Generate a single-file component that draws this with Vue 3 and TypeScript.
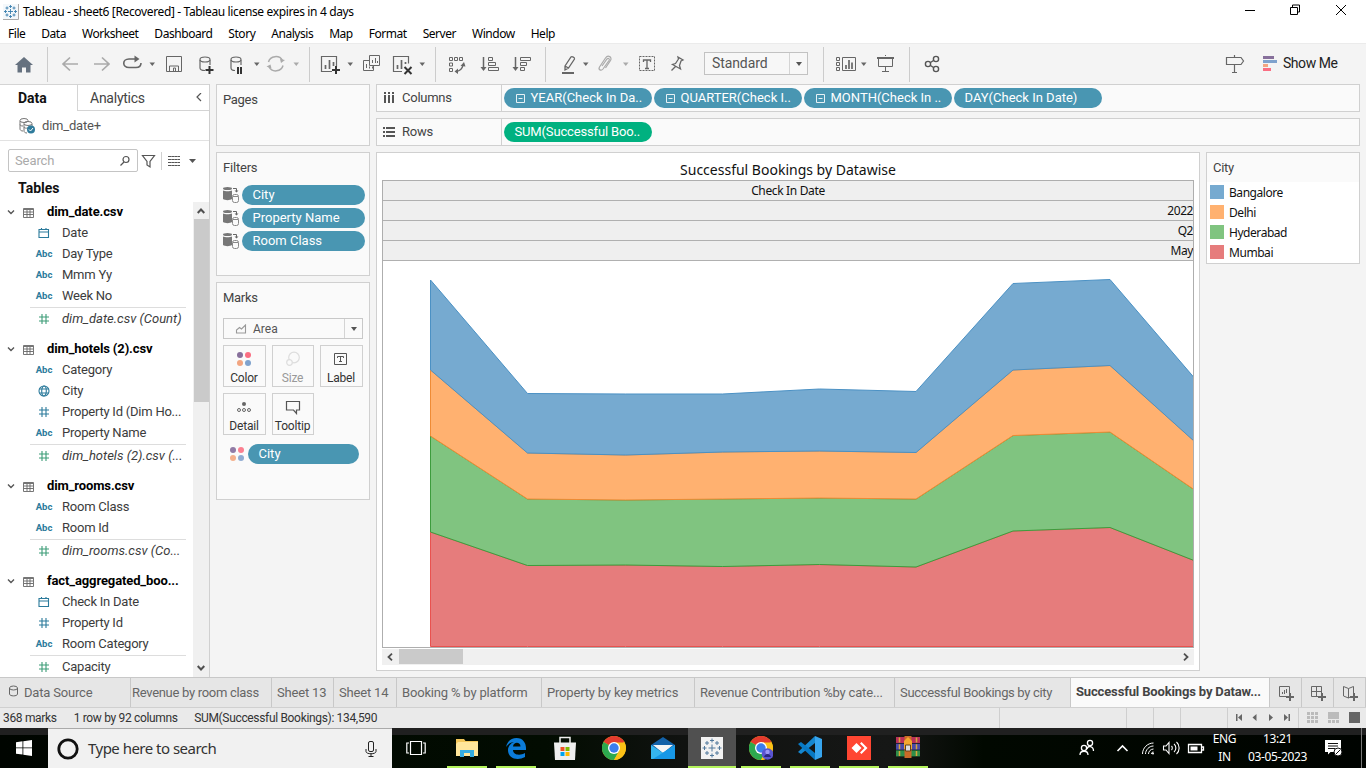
<script setup lang="ts">
interface Field { icon: 'date' | 'abc' | 'hash' | 'geo'; label: string; measure?: boolean; count?: boolean }
interface Table { name: string; fields: Field[] }

const menus = ['File', 'Data', 'Worksheet', 'Dashboard', 'Story', 'Analysis', 'Map', 'Format', 'Server', 'Window', 'Help']

const tables: Table[] = [
  { name: 'dim_date.csv', fields: [
    { icon: 'date', label: 'Date' },
    { icon: 'abc', label: 'Day Type' },
    { icon: 'abc', label: 'Mmm Yy' },
    { icon: 'abc', label: 'Week No' },
    { icon: 'hash', label: 'dim_date.csv (Count)', measure: true, count: true },
  ] },
  { name: 'dim_hotels (2).csv', fields: [
    { icon: 'abc', label: 'Category' },
    { icon: 'geo', label: 'City' },
    { icon: 'hash', label: 'Property Id (Dim Ho...' },
    { icon: 'abc', label: 'Property Name' },
    { icon: 'hash', label: 'dim_hotels (2).csv (...', measure: true, count: true },
  ] },
  { name: 'dim_rooms.csv', fields: [
    { icon: 'abc', label: 'Room Class' },
    { icon: 'abc', label: 'Room Id' },
    { icon: 'hash', label: 'dim_rooms.csv (Co...', measure: true, count: true },
  ] },
  { name: 'fact_aggregated_boo...', fields: [
    { icon: 'date', label: 'Check In Date' },
    { icon: 'hash', label: 'Property Id' },
    { icon: 'abc', label: 'Room Category' },
    { icon: 'hash', label: 'Capacity', measure: true },
  ] },
]

const columnPills = [
  { label: 'YEAR(Check In Da..', box: true },
  { label: 'QUARTER(Check I..', box: true },
  { label: 'MONTH(Check In ..', box: true },
  { label: 'DAY(Check In Date)', box: false },
]
const filters = ['City', 'Property Name', 'Room Class']

const xs = [430.5, 527.5, 625.5, 722.5, 819.5, 916, 1013, 1110, 1194]
const baseline = 646.5
const series = [
  { name: 'Bangalore', cls: 'bangalore', top: [280, 393.5, 394, 394, 389, 391.5, 283.5, 279.5, 377.5] },
  { name: 'Delhi', cls: 'delhi', top: [370, 453, 455, 452, 451, 452.5, 370, 365.5, 441] },
  { name: 'Hyderabad', cls: 'hyderabad', top: [436, 499, 500, 499, 498, 499, 435.5, 432, 489.5] },
  { name: 'Mumbai', cls: 'mumbai', top: [532, 565.5, 565, 566.5, 564.5, 567, 531, 527.5, 560.5] },
]
// Upper bands are drawn last so that their outline lies over the band below.
const areas = series.map((s, i) => {
  const lower = series[i + 1]?.top ?? xs.map(() => baseline)
  const back = lower.map((y, j) => `${xs[j]},${y}`).reverse().join(' ')
  const top = s.top.map((y, j) => `${xs[j]},${y}`).join(' ')
  return { cls: s.cls, outline: `${back} ${top}` }
}).reverse()

const sheets = ['Revenue by room class', 'Sheet 13', 'Sheet 14', 'Booking % by platform', 'Property by key metrics', 'Revenue Contribution %by cate...', 'Successful Bookings by city']
const apps = [
  { id: 'explorer', open: true }, { id: 'edge', open: true }, { id: 'store', open: false },
  { id: 'chrome', open: false }, { id: 'mail', open: false }, { id: 'tableau', open: true },
  { id: 'chrome2', open: true }, { id: 'code', open: true }, { id: 'anydesk', open: true }, { id: 'winrar', open: true },
]
const books = [{ y: 4, c: '#b8305a' }, { y: 10.7, c: '#4a4aa8' }, { y: 17.4, c: '#2f8f4a' }]
</script>

<template>
  <div class="window">
    <header class="titlebar">
      <svg class="logo" width="16" height="16" viewBox="0 0 16 16">
        <rect width="15" height="15" fill="#f4f8fb" /><path d="M0 15.500H15.500V0" stroke="#aaa" fill="none" />
        <g stroke="#3a7fae" fill="none"><path d="M7.500 5v5M5 7.500h5M7.500 1v3M6 2.500h3M7.500 11v3M6 12.500h3M2.500 6v3M1 7.500h3M12.500 6v3M11 7.500h3M4 2.500v3M2.500 4h3M11 2.500v3M9.500 4h3M4 9.500v3M2.500 11h3M11 9.500v3M9.500 11h3" stroke-width=".9" /></g>
      </svg>
      <span class="caption">Tableau - sheet6 [Recovered] - Tableau license expires in 4 days</span>
      <svg class="wincontrols" width="120" height="20" viewBox="1240 0 120 20" fill="none" stroke="#000">
        <path d="M1245 10.500h10M1290.500 7.500h7v7h-7zM1292.500 7v-2h7v7h-2M1336 5l10 10M1346 5l-10 10" />
      </svg>
    </header>
    <nav class="menubar"><span v-for="m in menus" :key="m">{{ m }}</span></nav>

    <div class="toolbar">
      <svg width="47" height="41" viewBox="0 44 47 41"><path d="M24 57l9 8h-2.500v7.500h-4.500v-5h-4v5h-4.500v-7.500h-2.500z" fill="#65717f" /></svg>
      <svg class="section" width="262" height="35" viewBox="47 47 262 35" fill="none" stroke="#666">
        <g stroke="#aaa" stroke-width="1.700"><path d="M78 64h-15m7-6.500l-7 6.500 7 6.500M94 64h15m-7-6.500l7 6.500-7 6.500" /></g>
        <path d="M136 59h-7c-7 0-7 8.500 0 8.500h7c4 0 5-2 5-4.500M133 59h4" stroke-width="1.600" /><path d="M134.500 55.500v7l5-3.500z" fill="#666" stroke="none" />
        <g fill="#666" stroke="none"><path d="M149.500 62.500h5.500l-2.700 3.500zM254 62.500h5.500l-2.700 3.500z" /><path d="M293.500 62.500h5.500l-2.700 3.500z" fill="#aaa" /></g>
        <path d="M166.500 56.500h15v15h-15zM169.500 71v-5h9v5M173.500 71v-3h2v3" />
        <g stroke-width="1.200"><ellipse cx="205" cy="59.500" rx="5" ry="2.500" /><path d="M200 60v8c0 1.500 2 2.500 5 2.500M210 60v5" /><ellipse cx="236" cy="59.500" rx="5" ry="2.500" /><path d="M231 60v8c0 1.500 2 2.500 4 2.500M241 60v5" /></g>
        <path d="M205.500 70h8M209.500 66v8M238 67v7M241 67v7" stroke="#333" stroke-width="2" />
        <g stroke="#aaa" stroke-width="1.500"><path d="M268.500 62a7.500 7 0 0 1 14-1.500M283 65.500a7.500 7 0 0 1-14 1.500" /><path d="M285 60l-4 3-1-4zM266.500 66.500l4-2 1 4z" fill="#aaa" stroke="none" /></g>
      </svg>
      <svg class="section" width="126" height="35" viewBox="309 47 126 35" fill="none" stroke="#666">
        <path d="M332 71.500h-10.500v-15h15v10" stroke-width="1.200" /><path d="M325.500 65v4M329.500 60v9M333.500 62v4" stroke-width="1.700" /><path d="M332 70h8M336 66v8" stroke="#333" stroke-width="2" />
        <path d="M347.500 62.500h5.500l-2.700 3.500zM419.500 62.500h5.500l-2.700 3.500z" fill="#666" stroke="none" />
        <path d="M369.500 55.500h10v10h-10zM369 60.500h-5.500v10h10v-5M366.500 64v4M369.500 66.500v2M372.500 66.500v2M372.500 60v3M375.500 58v5M377.500 61v2" />
        <path d="M402 71.500h-8.500v-15h15v7" stroke-width="1.200" /><path d="M397.500 65v4M401.500 60v9M405.500 62v2" stroke-width="1.700" /><path d="M404.500 67l7 7M411.500 67l-7 7" stroke="#333" stroke-width="2" />
      </svg>
      <svg class="section" width="110" height="35" viewBox="435 47 110 35" fill="none" stroke="#666">
        <path d="M449.500 57.500h3v3h-3zM454.500 57.500h3v3h-3zM459.500 57.500h3v3h-3zM449.500 63h3v3h-3zM449.500 68.500h3v3h-3z" /><path d="M463 65c-.5 3-3 6-7 6.500" stroke-width="1.400" /><path d="M460.500 66l3.500-4 1.500 4.500zM458 68.500l-3.500 3 3.500 2.500z" fill="#666" stroke="none" />
        <path d="M483.500 57v12M515.500 57v12" stroke-width="1.500" /><path d="M480.500 67h6l-3 4zM512.500 67h6l-3 4z" fill="#666" stroke="none" />
        <path d="M488.500 57.500h4v3h-4zM488.500 62.500h7v3h-7zM488.500 67.500h10v3h-10zM520.500 57.500h10v3h-10zM520.500 62.500h6v3h-6zM520.500 67.500h4v3h-4z" />
      </svg>
      <svg class="section" width="159" height="35" viewBox="545 47 159 35" fill="none" stroke="#666">
        <path d="M565 66l6-9c1-1 4 .5 3.500 2l-6 9-3.500 2zM565 66l3.500 2" stroke-width="1.300" /><path d="M562 73h12" stroke-width="2" />
        <path d="M583 62.500h5.500l-2.700 3.500z" fill="#666" stroke="none" /><path d="M623 62.500h5.500l-2.700 3.500z" fill="#aaa" stroke="none" />
        <path d="M602 66l5-7c1.500-1.500 3 0 2 1.500l-6 8.500c-2 2.500-5 .5-3.500-2l6-9c2.500-3.500 7-1 5 2.500l-5 7.500" stroke="#aaa" stroke-width="1.200" />
        <path d="M639.500 56.500h15v14h-15z" stroke-dasharray="2 1" /><path d="M643.500 62v-2h7v2M647 60v8M645 68.500h4" stroke-width="1.300" />
        <path d="M678 57l5 3-2 1-1.500 4.500 1 3.500-8-4.500 3-1 3-4.500zM675.500 66.500l-4 4" stroke-width="1.300" />
      </svg>
      <div class="select"><span>Standard</span><i class="caret" /></div>
      <svg class="section guides" width="86" height="35" viewBox="823 47 86 35" fill="none" stroke="#666">
        <path d="M836.500 57.500h3v3h-3zM836.500 62.500h3v3h-3zM836.500 67.500h3v3h-3zM842.500 57.500h13v13h-13z" /><path d="M846 65v4M849 60v9M852 62.500v6.500" stroke-width="1.700" /><path d="M861 62.500h5.500l-2.700 3.500z" fill="#666" stroke="none" />
        <path d="M877 58h17" stroke-width="2" /><path d="M878.500 58v8.500h14v-8.500M885.500 56v-1M885.500 66.500v5M882 71.500h7" />
      </svg>
      <svg class="section" width="60" height="35" viewBox="909 47 60 35" fill="none" stroke="#555" stroke-width="1.400"><circle cx="928" cy="64" r="2.600" /><circle cx="936" cy="59" r="2.600" /><circle cx="936" cy="69" r="2.600" /><path d="M930.500 62.500l3-2M930.500 65.500l3 2" /></svg>
      <svg class="guide" width="60" height="35" viewBox="1222 47 60 35" fill="none" stroke="#666" stroke-width="1.200">
        <path d="M1226.500 57.500h14.500l2.500 3.500-2.500 3.500h-14.500zM1234.500 55v2.500M1234.500 64.500v8M1232 72.500h5" />
        <g stroke="none"><path d="M1263 56h11v3h-11z" fill="#87709b" /><path d="M1263 60h14v3h-14z" fill="#7fa2cd" /><path d="M1263 64h5v3h-5z" fill="#f2a581" /><path d="M1263 68h8v3h-8z" fill="#fa6e82" /></g>
      </svg>
      <span class="showme">Show Me</span>
    </div>

    <div class="workspace">
      <aside class="data">
        <div class="datatabs">
          <span class="on">Data</span>
          <span class="off">Analytics <svg width="8" height="10" viewBox="0 0 8 10"><path d="M6 0L2 4l4 4" fill="none" stroke="#555" stroke-width="1.200" /></svg></span>
        </div>
        <div class="source">
          <svg width="18" height="18" viewBox="0 0 18 18" fill="none" stroke="#777"><ellipse cx="5" cy="3.500" rx="4" ry="2" /><path d="M1 4v8c0 1 1 2 3 2M1 7.500c0 1 1 1.500 3 1.500M9 4v1" /><ellipse cx="9" cy="6.500" rx="4" ry="2" /><path d="M5 7v7c0 1 1 2 3 2M5 10c0 1 2 1.500 4 1M13 7v2" /><circle cx="12" cy="12.500" r="4" fill="#2f7b9c" stroke="none" /><path d="M10 12.500l1.500 1.500 2.500-3" stroke="#fff" /></svg>
          <span>dim_date+</span>
        </div>
        <div class="find">
          <div class="search"><span>Search</span><svg width="12" height="12" viewBox="0 0 12 12" fill="none" stroke="#555" stroke-width="1.200"><circle cx="7" cy="4.500" r="3" /><path d="M5 7L1.500 10.500" /></svg></div>
          <svg width="60" height="18" viewBox="140 151 60 18" fill="none" stroke="#555"><path d="M142.500 154.500h12l-4.500 6v5.500l-3-2v-3.500z" stroke-width="1.200" /><path d="M161.500 151v18" stroke="#d0d0d0" /><path d="M168 155.500h12M168 158.500h12M168 161.500h12M168 164.500h12" stroke-dasharray="3 .3" stroke-width="1.200" /><path d="M189 158h7l-3.500 4z" fill="#555" stroke="none" /></svg>
        </div>
        <div class="tables-title">Tables</div>
        <div class="treewrap">
          <div class="tree">
            <section v-for="t in tables" :key="t.name" class="group">
              <div class="head">
                <svg width="8" height="6" viewBox="0 0 8 6"><path d="M1 1.500l3 3 3-3" fill="none" stroke="#555" stroke-width="1.400" /></svg>
                <svg class="grid" width="11" height="10" viewBox="0 0 11 10"><path d="M.5.500h10v9H.5zM1 1.500h9M1 4h9M1 6.500h9M4 2v7M7 2v7" fill="none" stroke="#666" stroke-width=".9" /></svg>
                <b>{{ t.name }}</b>
              </div>
              <div v-for="f in t.fields" :key="f.label" :class="['field', { measure: f.measure, count: f.count }]">
                <span class="type">
                  <template v-if="f.icon === 'abc'">Abc</template>
                  <svg v-else width="12" height="12" viewBox="0 0 12 12" fill="none" stroke="currentColor" stroke-width="1.100">
                    <path v-if="f.icon === 'date'" d="M1 2.500h9.500v8H1zM1 5h9.500M3.500 1v2M8 1v2" />
                    <path v-else-if="f.icon === 'hash'" d="M4 1v10M8 1v10M1 4h10M1 8h10" />
                    <template v-else><circle cx="6" cy="6" r="5" /><ellipse cx="6" cy="6" rx="2.300" ry="5" /><path d="M1.500 4h9M1.500 8h9" /></template>
                  </svg>
                </span>
                <span class="name">{{ f.label }}</span>
              </div>
            </section>
          </div>
          <div class="vscroll">
            <svg width="8" height="6" viewBox="0 0 8 6"><path d="M.7 5L4 1.500 7.300 5" fill="none" stroke="#505050" stroke-width="2" /></svg>
            <i />
            <svg width="8" height="6" viewBox="0 0 8 6"><path d="M.7 1L4 4.500 7.300 1" fill="none" stroke="#505050" stroke-width="2" /></svg>
          </div>
        </div>
      </aside>

      <div class="cards">
        <section class="card pages"><h3>Pages</h3></section>
        <section class="card filters">
          <h3>Filters</h3>
          <div v-for="f in filters" :key="f" class="filter">
            <svg width="17" height="18" viewBox="0 0 17 18"><ellipse cx="4.500" cy="2.500" rx="4.500" ry="1.500" fill="#777" /><path d="M0 4.500c2 1 7 1 9 0V13c-2 1.500-7 1.500-9 0z" fill="#777" /><path d="M10 2.500h3.500V5" stroke="#666" fill="none" /><path d="M11.500 4.500h4l-2 2z" fill="#666" /><rect x="9.500" y="8.500" width="6" height="8" rx="2" fill="#fafafa" stroke="#888" /><path d="M10 10.500h5" stroke="#888" /></svg>
            <span class="pill">{{ f }}</span>
          </div>
        </section>
        <section class="card marks">
          <h3>Marks</h3>
          <div class="marktype"><svg width="12" height="10" viewBox="0 0 12 10"><path d="M1.500 9V6l3-2.500 2 1.500 4-4v8z" fill="none" stroke="#999" stroke-width="1.100" /></svg><span>Area</span><i class="caret" /></div>
          <div class="buttons">
            <div class="btn"><svg width="16" height="16" viewBox="0 0 16 16"><circle cx="4" cy="4" r="3" fill="#87709b" /><circle cx="12" cy="4" r="3" fill="#fa6e82" /><circle cx="4" cy="12" r="3" fill="#f2a581" /><circle cx="12" cy="12" r="3" fill="#7fa2cd" /></svg><span>Color</span></div>
            <div class="btn dim"><svg width="16" height="16" viewBox="0 0 16 16" fill="none" stroke="#ddd" stroke-width="1.200"><circle cx="9" cy="6.500" r="5.300" /><circle cx="4.500" cy="11.500" r="2.800" fill="#fafafa" /></svg><span>Size</span></div>
            <div class="btn"><svg width="16" height="16" viewBox="0 0 16 16" fill="none" stroke="#555"><path d="M1.500 2.500h12v11h-12zM4.500 7V5.500h6V7M7.500 5.500V11M6 10.500h3" /></svg><span>Label</span></div>
            <div class="btn"><svg width="16" height="16" viewBox="0 0 16 16" fill="none" stroke="#666"><circle cx="8" cy="5" r="2" fill="#666" stroke="none" /><circle cx="3" cy="11" r="1.500" /><circle cx="8" cy="11" r="1.500" /><circle cx="13" cy="11" r="1.500" /></svg><span>Detail</span></div>
            <div class="btn"><svg width="16" height="16" viewBox="0 0 16 16" fill="none" stroke="#555" stroke-width="1.200"><path d="M1.500 2.500h13v8.500h-3v3.500L8.500 11h-7z" /></svg><span>Tooltip</span></div>
          </div>
          <div class="encoding">
            <svg width="16" height="16" viewBox="0 0 16 16"><circle cx="4" cy="4" r="3" fill="#917ba5" /><circle cx="12" cy="4" r="3" fill="#fb8090" /><circle cx="4" cy="12" r="3" fill="#f5b08c" /><circle cx="12" cy="12" r="3" fill="#90acd2" /></svg>
            <span class="pill">City</span>
          </div>
        </section>
      </div>

      <div class="stage">
        <div class="shelf">
          <div class="shelfname"><svg width="14" height="13" viewBox="0 0 14 13" stroke="#555" stroke-width="2"><path d="M3 0v2M7 0v2M11 0v2M3 3v8M7 3v8M11 3v8" /></svg>Columns</div>
          <span v-for="p in columnPills" :key="p.label" class="pill">
            <svg v-if="p.box" width="9" height="9" viewBox="0 0 9 9"><path d="M.5.500h8v8h-8zM2.500 4.500h4" fill="none" stroke="#e6f1f5" /></svg>{{ p.label }}
          </span>
        </div>
        <div class="shelf rows">
          <div class="shelfname"><svg width="14" height="13" viewBox="0 0 14 13" stroke="#555" stroke-width="2"><path d="M1 2h2M1 6h2M1 10h2M4 2h9M4 6h9M4 10h9" /></svg>Rows</div>
          <span class="pill green">SUM(Successful Boo..</span>
        </div>
        <div class="canvas">
          <main class="viz">
            <h1>Successful Bookings by Datawise</h1>
            <div class="frame">
              <div class="hrow center">Check In Date</div>
              <div class="hrow">2022</div>
              <div class="hrow">Q2</div>
              <div class="hrow">May</div>
              <svg class="chart" width="810" height="386" viewBox="383 261 810 386">
                <polyline v-for="a in areas" :key="a.cls" :class="a.cls" :points="a.outline" />
              </svg>
            </div>
            <div class="hscroll">
              <svg width="6" height="8" viewBox="0 0 6 8"><path d="M5 .7L1.500 4 5 7.300" fill="none" stroke="#505050" stroke-width="1.800" /></svg><i />
              <svg width="6" height="8" viewBox="0 0 6 8"><path d="M1 .7L4.500 4 1 7.300" fill="none" stroke="#505050" stroke-width="1.800" /></svg>
            </div>
          </main>
          <section class="legend">
            <h3>City</h3>
            <div v-for="s in series" :key="s.name" class="item"><i :class="s.cls" /><span>{{ s.name }}</span></div>
          </section>
        </div>
      </div>
    </div>

    <div class="sheettabs">
      <span class="ds"><svg width="9" height="12" viewBox="0 0 9 12" fill="none" stroke="#666"><ellipse cx="4.500" cy="3" rx="4" ry="2" /><path d="M.5 3v6c0 2.500 8 2.500 8 0V3" /></svg>Data Source</span>
      <span v-for="(s, i) in sheets" :key="s" :class="{ first: i === 0, last: i === sheets.length - 1 }">{{ s }}</span>
      <span class="active">Successful Bookings by Dataw...</span>
      <span class="new"><svg width="16" height="16" viewBox="0 0 16 16" fill="none" stroke="#666"><path d="M8 11.500H1.500v-10h10V8M4.500 7v2M6.500 5v4M8.500 4v4" /><path d="M8 12h8M12 8v8" stroke-width="2" /></svg></span>
      <span class="new"><svg width="16" height="16" viewBox="0 0 16 16" fill="none" stroke="#666"><path d="M8 11.500H1.500v-10h10V8M1.500 6.500h10M6.500 1.500v10" /><path d="M8 12h8M12 8v8" stroke-width="2" /></svg></span>
      <span class="new"><svg width="16" height="16" viewBox="0 0 16 16" fill="none" stroke="#666"><path d="M9 11.500L6.500 13 1.500 11V1.500L6.500 3.500l5-2V8M6.500 3.500V13" /><path d="M8 12h8M12 8v8" stroke-width="2" /></svg></span>
    </div>
    <footer class="status">
      <span class="s1">368 marks</span><span class="s2">1 row by 92 columns</span><span class="s3">SUM(Successful Bookings): 134,590</span>
      <svg width="367" height="20" viewBox="999 708 367 20">
        <path d="M999.500 708v20M1126.500 708v20M1153.500 708v20M1180.500 708v20M1227.500 708v20M1298.500 708v20" stroke="#cfcfcf" />
        <g fill="#666"><path d="M1236 714h1.500v7h-1.500zM1242 714v7l-4-3.500zM1256.500 714v7l-4-3.500zM1269 714v7l4-3.500zM1284 714v7l4-3.500zM1288.500 714h1.500v7h-1.500z" /><path d="M1349 712h11v11h-11z" /></g>
        <g fill="#bbb"><path d="M1307 712h3v3h-3zM1311 712h3v3h-3zM1315 712h3v3h-3zM1307 716h3v3h-3zM1311 716h3v3h-3zM1315 716h3v3h-3zM1307 720h3v3h-3zM1311 720h3v3h-3zM1315 720h3v3h-3zM1328 712h11v7h-11zM1328 720h3v3h-3zM1332 720h3v3h-3zM1336 720h3v3h-3z" /></g>
      </svg>
    </footer>

    <div class="taskbar">
      <div class="start"><svg width="16" height="16" viewBox="0 0 16 16" fill="#fff"><path d="M0 2.300L6.500 1.300v6.200H0zM7.300 1.200L16 0v7.500H7.300zM0 8.300h6.500v6.300L0 13.700zM7.300 8.300H16V16l-8.700-1.200z" /></svg></div>
      <div class="tsearch">
        <svg width="22" height="22" viewBox="0 0 22 22"><circle cx="11" cy="11" r="9.200" fill="none" stroke="#111" stroke-width="2.800" /></svg>
        <span>Type here to search</span>
        <svg width="12" height="16" viewBox="0 0 12 16" fill="none" stroke="#222"><rect x="3.500" y=".5" width="5" height="10" rx="1.500" /><path d="M1 8v2.500c0 3 10 3 10 0V8M6 12.500V15M3.500 15.500h5" /></svg>
      </div>
      <div class="view"><svg width="20" height="16" viewBox="0 0 20 16" fill="none" stroke="#fff" stroke-width="1.200"><path d="M4.500 1.500h11v13h-11zM3 3H.8v10H3M17 3h2.200v10H17" /></svg></div>
      <div v-for="a in apps" :key="a.id" :class="['app', a.id, { open: a.open }]">
        <svg width="24" height="24" viewBox="0 0 24 24">
          <g v-if="a.id === 'explorer'"><path d="M1 3h8l1.500 2H23v15H1z" fill="#f4c75a" /><path d="M3 6h20v14H1V8z" fill="#ffe69b" /><path d="M5 21v-7h14v7h-4v-4H9v4z" fill="#35ace0" /></g>
          <g v-else-if="a.id === 'edge'"><path d="M2 11C4 4 8 2 12.500 2 19 2 22 7 22 12v2H9c0 5 7 6 12 3v4c-7 4-17 2-17-7 0-4 3-7 6-8-3 0-6 2-8 5zM9 10.500h7.500C16.500 5.500 9.500 5.500 9 10.500z" fill="#0b7bd8" fill-rule="evenodd" /></g>
          <g v-else-if="a.id === 'store'"><path d="M7 7V1.500h10V7" fill="none" stroke="#eee" stroke-width="1.500" /><path d="M1 6.500h22L22 24H2z" fill="#efefef" /><path d="M7.500 11h4v4h-4z" fill="#f05024" /><path d="M12.500 11h4v4h-4z" fill="#7fba00" /><path d="M7.500 16h4v4h-4z" fill="#00a4ef" /><path d="M12.500 16h4v4h-4z" fill="#ffb900" /></g>
          <g v-else-if="a.id === 'chrome' || a.id === 'chrome2'"><circle cx="12" cy="12" r="12" fill="#fbc116" /><path d="M12 12L1.600 6A12 12 0 0 1 22.400 6z" fill="#e33b2e" /><path d="M12 12L1.600 6A12 12 0 0 0 12 24l5.200-9z" fill="#2da94f" /><path d="M12 6.400h10.600A12 12 0 0 1 12 24l5-9z" fill="#fbc116" /><circle cx="12" cy="12" r="6" fill="#fff" /><circle cx="12" cy="12" r="4.700" fill="#3b7ded" /><template v-if="a.id === 'chrome2'"><circle cx="18.500" cy="18" r="5.800" fill="#5a54d0" /><circle cx="18.500" cy="16" r="2.200" fill="#9a96f5" /><path d="M15 21c1-4 6-4 7 0z" fill="#2a2780" /></template></g>
          <g v-else-if="a.id === 'mail'"><path d="M0 9l12-8 12 8v14H0z" fill="#1361a8" /><path d="M2 9h20l-10 8z" fill="#f5f5f5" /><path d="M0 9l12 8 12-8v14H0z" fill="#35b5ee" /><path d="M24 9v14H2z" fill="#1797e6" /></g>
          <g v-else-if="a.id === 'tableau'"><path d="M1 1h22v22H1z" fill="#f2f2f2" /><path d="M12 8.500v7M8.500 12h7M12 2.500v4M10 4.500h4M12 17.500v4M10 19.500h4M4.500 10v4M2.500 12h4M19.500 10v4M17.500 12h4M7 5v4M5 7h4M17 5v4M15 7h4M7 15v4M5 17h4M17 15v4M15 17h4" stroke="#51799c" /></g>
          <g v-else-if="a.id === 'code'"><path d="M17 0v7L3 18l-3-2z" fill="#1687cf" /><path d="M17 24v-7L3 6 0 8z" fill="#0879c4" /><path d="M17 0l7 3v18l-7 3z" fill="#37a5ee" /></g>
          <g v-else-if="a.id === 'anydesk'"><path d="M0 0h24v24H0z" fill="#ff4632" /><path d="M4.500 12l5-5 5 5-5 5zM13 7.500l1.500-1.500 6 6-6 6L13 16.500l4.500-4.500z" fill="#fff" /></g>
          <g v-else><template v-for="b in books" :key="b.y"><path :d="`M0 ${b.y - 3}h24v6H0z`" :fill="b.c" /><path :d="`M3.500 ${b.y - 2.500}v5M20.500 ${b.y - 2.500}v5`" stroke="#d9a43a" stroke-width="1.500" /></template><path d="M8.500 0h7v22h-7z" fill="#c96a28" /><path d="M8 5l4-4 4 4v8H8z" fill="#f3a82d" /><path d="M9.500 9h5v6h-5z" fill="#ddd" stroke="#64421a" /></g>
        </svg>
      </div>
      <div class="tray">
        <svg width="130" height="40" viewBox="1076 728 130 40" fill="none" stroke="#fff" stroke-width="1.300">
          <circle cx="1090" cy="743" r="2.600" /><circle cx="1084" cy="748" r="2.600" /><path d="M1080 755c0-5 8-5 8 0M1087 749c1-4 6.500-3 6.500 2" />
          <path d="M1117.500 751l5-5 5 5" stroke-width="1.600" />
          <path d="M1142.500 754c0-6 5-11 11-11M1145.500 754c0-4 3.500-8 8-8M1148.500 754c0-2.500 2-5 5-5M1151.500 754c0-1.500 1-2 2-2" stroke-width="1" /><circle cx="1153" cy="753.500" r="1" fill="#fff" stroke="none" />
          <path d="M1163.500 746h2.500l3-3.500v11l-3-3.500h-2.500zM1171.500 746c1 1 1 3 0 4M1174 744c2.500 2 2.500 6 0 8M1176.500 742c3.500 3 3.500 9 0 12" stroke-width="1.100" />
          <path d="M1188.500 744.500h13v8h-13zM1202 747h1.500v3h-1.500" /><path d="M1190.500 746.500h7v4h-7z" fill="#fff" stroke="none" />
        </svg>
        <div class="lang">ENG<br>IN</div>
        <div class="clock">13:21<br>03-05-2023</div>
        <svg class="notice" width="18" height="17" viewBox="0 0 18 17"><path d="M0 0h16v12H5.500L3 14.500V12H0z" fill="#fff" /><path d="M3 3.500h10M3 6h10M3 8.500h7" stroke="#111" /><circle cx="13" cy="12" r="4" fill="#fff" stroke="#111" /><path d="M11 14l4-4" stroke="#111" /></svg>
        <i class="peek" />
      </div>
    </div>
  </div>
</template>

<style>
body { margin: 0; overflow: hidden; }
</style>
<style scoped>
* { box-sizing: border-box; }
svg { display: block; flex: none; }
h1, h3 { margin: 0; font-weight: 400; }
.window { width: 1366px; height: 768px; display: flex; flex-direction: column; overflow: hidden; background: #f4f4f4; font: 13px/20px Roboto, "Liberation Sans", sans-serif; color: #444; white-space: nowrap; }
.titlebar, .menubar, .hrow, .viz h1, .legend .item, .tsearch, .lang, .clock { font-family: "Noto Sans", "Open Sans", sans-serif; }
.titlebar { height: 23px; background: #fff; display: flex; color: #000; font-size: 12px; padding: 3px 6px 0 3px; line-height: 18px; }
.logo { margin-top: 1px; }
.caption { margin-left: 4px; flex: 1; letter-spacing: -.36px; }
.wincontrols { margin-top: -3px; }
.menubar { height: 20px; background: #fff; display: flex; gap: 15.900px; padding-left: 8px; color: #000; font-size: 12px; line-height: 22px; letter-spacing: -.45px; }
.toolbar { height: 41px; border-top: 1px solid #ebebeb; display: flex; flex: none; }
.section { margin-top: 3px; background: linear-gradient(#ccc, #ccc) 0 0 / 1px 100% no-repeat; }
.select { width: 104px; height: 23px; margin-top: 8px; border: 1px solid #c2c2c2; display: flex; font-size: 14px; line-height: 21px; padding-left: 7px; background: #f7f7f7; color: #555; letter-spacing: -.1px; }
.select span, .marktype span { flex: 1; }
.caret { width: 18px; border-left: 1px solid #d4d4d4; display: flex; align-items: center; justify-content: center; }
.caret::after { content: ""; border: 3.500px solid transparent; border-top: 4px solid #555; border-bottom: 0; }
.guides { margin-left: 15px; }
.guide { margin: 3px 0 0 253px; }
.showme { font-size: 14px; line-height: 39px; color: #222; margin-left: 1px; letter-spacing: -.45px; }

.workspace { height: 593px; display: flex; flex: none; }
.data { width: 210px; border-right: 1px solid #d0d0d0; background: #fff; display: flex; flex-direction: column; }
.datatabs { display: flex; height: 27px; font-size: 14px; line-height: 26px; }
.datatabs .on { width: 77px; padding-left: 18px; border-top: 1px solid #d4d4d4; font-weight: 700; color: #111; }
.datatabs .off { flex: 1; border: 1px solid #d4d4d4; border-right: 0; padding: 0 6px 0 12px; display: flex; align-items: center; justify-content: space-between; line-height: 24px; letter-spacing: -.25px; }
.source { height: 30px; border-bottom: 1px solid #e2e2e2; display: flex; align-items: center; gap: 5px; padding-left: 19px; letter-spacing: -.2px; color: #555; }
.find { display: flex; padding: 8px 0 0 8px; height: 31px; gap: 2px; align-items: center; }
.search { width: 130px; height: 23px; border: 1px solid #c4c4c4; border-radius: 2px; display: flex; justify-content: space-between; align-items: center; padding: 0 6px; color: #aaa; letter-spacing: -.1px; }
.tables-title { height: 30px; line-height: 33px; padding-left: 18px; font-weight: 700; font-size: 14px; color: #111; }
.treewrap { display: flex; flex: 1; min-height: 0; }
.tree { width: 193px; overflow: hidden; }
.group { margin-bottom: 9px; }
.head { height: 21px; display: flex; align-items: center; padding: 0 0 1px 7px; color: #000; }
.head b { margin: 0 0 1px 12px; letter-spacing: -.12px; }
.grid { margin: 1px 1px 0 8px; }
.field { height: 21px; display: flex; align-items: center; margin: 0 7px 0 30px; padding-bottom: 1px; color: #3c3c3c; }
.field.measure { height: 23px; border-top: 1px solid #ddd; padding-bottom: 0; }
.type { width: 28px; display: flex; justify-content: center; color: #2b7a9b; font-weight: 700; font-size: 9.500px; flex: none; }
.measure .type { color: #3c9c77; }
.name { margin-left: 4px; letter-spacing: -.23px; }
.count .name { font-style: italic; letter-spacing: 0; }
.vscroll { width: 16px; background: #f0f0f0; display: flex; flex-direction: column; align-items: center; padding: 6px 0 6px; }
.vscroll i { width: 15px; height: 183px; background: #cacaca; margin: 5px 0 auto; }

.cards { width: 154px; margin-left: 6px; display: flex; flex-direction: column; gap: 6px; }
.card { border: 1px solid #d0d0d0; background: #fafafa; padding: 5px 6px; }
h3 { font-size: 13px; line-height: 20px; letter-spacing: -.3px; }
.pages { height: 62px; }
.filters { height: 124px; }
.marks { height: 218px; }
.filters h3 { margin-bottom: 7px; letter-spacing: -.2px; }
.pill { height: 20px; border-radius: 10px; background: #4996b2; color: #fff; padding: 0 10.500px; display: flex; align-items: center; line-height: 20px; overflow: hidden; }
.filter { display: flex; gap: 2px; margin-bottom: 3px; align-items: center; }
.filter .pill { width: 123px; flex: none; }
.marktype { margin: 10px 0 6px; height: 21px; border: 1px solid #c8c8c8; display: flex; align-items: center; padding-left: 11px; font-size: 12px; color: #555; width: 140px; }
.marktype span { margin-left: 6px; }
.marktype .caret { height: 19px; }
.buttons { display: grid; grid-template-columns: 43px 42px 43px; gap: 6px; }
.btn { height: 42px; border: 1px solid #d0d0d0; display: flex; flex-direction: column; align-items: center; font-size: 12px; line-height: 14px; padding: 5px 1px 0 0; gap: 4px; color: #333; letter-spacing: -.2px; }
.btn.dim { color: #999; }
.encoding { display: flex; align-items: center; margin: 9px 0 0 6px; gap: 3px; }
.encoding .pill { width: 111px; }

.stage { margin-left: 6px; width: 984px; display: flex; flex-direction: column; gap: 6px; }
.shelf { height: 28px; border: 1px solid #d0d0d0; background: #fafafa; display: flex; align-items: center; gap: 2px; }
.shelfname { width: 125px; height: 26px; border-right: 1px solid #d0d0d0; display: flex; align-items: center; gap: 6px; padding-left: 5px; letter-spacing: -.25px; }
.shelf .pill { width: 148px; flex: none; gap: 5.500px; }
.shelf .pill svg { margin-left: 1.500px; }
.shelf .pill.green { background: #00b180; letter-spacing: -.15px; }
.canvas { display: flex; gap: 6px; align-items: flex-start; }
.viz { width: 824px; height: 519px; border: 1px solid #d0d0d0; background: #fff; padding: 7px 5px 0; }
.viz h1 { font-size: 14px; line-height: 20px; text-align: center; color: #111; letter-spacing: 0; }
.frame { border: 1px solid #aeaeae; height: 468px; width: 812px; overflow: hidden; }
.hrow { height: 20px; border-bottom: 1px solid #b0b0b0; background: #efefef; text-align: right; font-size: 12px; line-height: 20px; color: #111; letter-spacing: -.45px; }
.hrow.center { text-align: center; letter-spacing: -.35px; }
.hscroll { margin-top: 1px; height: 16px; background: #f0f0f0; display: flex; align-items: center; padding: 0 5px 1px; }
.hscroll i { width: 64px; height: 15px; background: #cacaca; margin: 0 auto 0 6px; }
.bangalore { fill: #76aad0; stroke: #4b91c4; background: #76aad0; }
.delhi { fill: #ffb170; stroke: #ef8b35; background: #ffb170; }
.hyderabad { fill: #80c480; stroke: #3d9c3d; background: #80c480; }
.mumbai { fill: #e67c7c; stroke: #e9524f; background: #e67c7c; }
.legend { width: 154px; height: 112px; border: 1px solid #d0d0d0; background: #fff; }
.legend h3 { height: 29px; background: #fafafa; padding-left: 6px; line-height: 30px; }
.item { height: 20px; display: flex; align-items: center; gap: 5px; padding-left: 3px; font-size: 12px; color: #111; letter-spacing: -.45px; }
.item span { padding-top: 2px; }
.item i { width: 14px; height: 14px; }

.sheettabs { height: 31px; flex: none; display: grid; grid-template-columns: 131px 141px 62px 63px 145px 153px 200px 176px 199px 32px 32px 32px; background: #e6e6e6; border-top: 1px solid #c8c8c8; border-bottom: 1px solid #d0d0d0; color: #666; line-height: 30px; letter-spacing: -.18px; }
.sheettabs span { border-right: 1px solid #c8c8c8; padding-left: 5px; overflow: hidden; }
.sheettabs .first { padding-left: 1px; letter-spacing: -.3px; }
.sheettabs .last { letter-spacing: -.33px; }
.sheettabs .ds { display: flex; gap: 6px; padding: 7px 0 0 9px; line-height: 16px; }
.sheettabs .active { background: #fafafa; font-weight: 700; color: #444; line-height: 28px; letter-spacing: -.15px; }
.sheettabs .new { display: flex; padding: 7px 0 0 8px; }
.status { height: 20px; flex: none; background: #eaeaea; display: flex; font-size: 12px; color: #333; padding-left: 3px; letter-spacing: -.33px; }
.s2 { margin-left: 17px; }
.s3 { margin-left: 16.500px; flex: 1; }

.taskbar { height: 40px; flex: none; display: flex; color: #fff; background: linear-gradient(#202020 7px, transparent 7px), linear-gradient(90deg, #000500, #020c01 40%, #101210 50%, #161716 65%, #010800 72%, #000300); }
.start { width: 48px; display: flex; justify-content: center; padding-top: 12px; }
.tsearch { width: 344px; background: #f1f1f1; border-top: 1px solid #aaa; display: flex; align-items: center; padding: 0 15px 0 9px; color: #333; font-size: 15px; }
.tsearch span { margin: 0 0 1px 9px; flex: 1; letter-spacing: -.52px; }
.view { width: 50px; padding: 12px 14px; }
.app { width: 49px; display: flex; justify-content: center; padding-top: 8px; height: 40px; }
.app.open { background: linear-gradient(#b4f45c, #b4f45c) 5px 100% / 40px 2px no-repeat; }
.app.tableau { background: linear-gradient(#b4f45c, #b4f45c) 1px 100% / 48px 2px no-repeat, linear-gradient(#505050, #505050) 1px 0 / 48px 40px no-repeat; }
.tray { flex: 1; display: flex; padding-left: 144px; }
.lang, .clock { font-size: 12px; line-height: 18px; text-align: center; padding-top: 2px; letter-spacing: -.35px; }
.lang { width: 37px; }
.clock { width: 69px; }
.notice { margin: 12px 0 0 13px; }
.peek { margin-left: auto; width: 5px; border-left: 1px solid #777; }
</style>
